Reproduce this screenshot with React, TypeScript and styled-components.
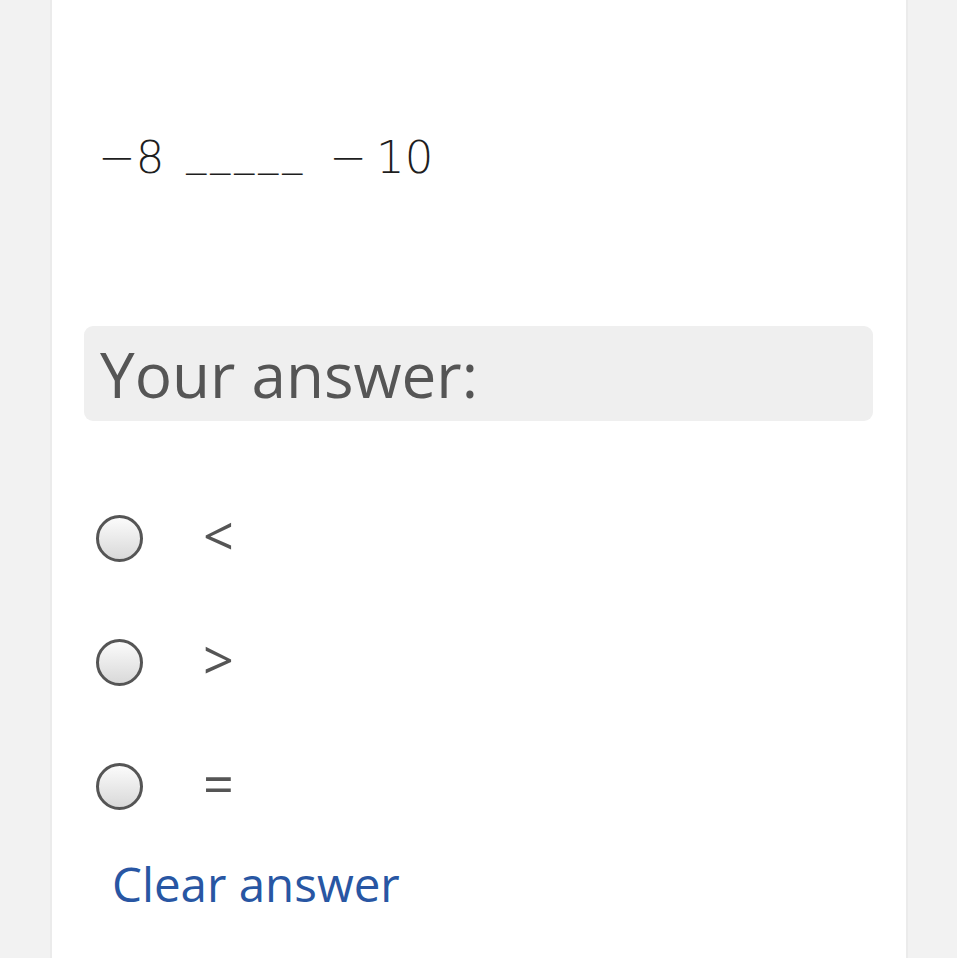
import React, { FC } from "react";
import styled, { createGlobalStyle } from "styled-components";

const GlobalStyle = createGlobalStyle`
  html, body {
    margin: 0;
    padding: 0;
    background: #f2f2f2;
    height: 958px;
    overflow: hidden;
  }
`;

const options = ["<", ">", "="];

const App: FC = () => {
  return (
    <>
      <GlobalStyle />
      <Page>
        <Card>
          <Question>
            <Term>−8</Term>
            <Blank>_____</Blank>
            <Term>−{"\u2009"}10</Term>
          </Question>

          <AnswerHeader>Your answer:</AnswerHeader>

          <OptionList>
            {options.map((option) => (
              <OptionRow key={option}>
                <Radio />
                <OptionLabel>{option}</OptionLabel>
              </OptionRow>
            ))}
          </OptionList>

          <ClearLink href="#">Clear answer</ClearLink>
        </Card>
      </Page>
    </>
  );
};

const Page = styled.div`
  display: flex;
  justify-content: flex-start;
  padding-left: 50px;
  height: 958px;
`;

const Card = styled.div`
  width: 858px;
  height: 1000px;
  box-sizing: border-box;
  background: #ffffff;
  border-left: 2px solid #ebebeb;
  border-right: 2px solid #ebebeb;
  padding: 0 33px 0 32px;
  display: flex;
  flex-direction: column;
`;

const Question = styled.div`
  margin-top: 128px;
  padding-left: 14px;
  display: flex;
  align-items: baseline;
  gap: 22px;
  font-family: "DejaVu Sans", sans-serif;
  font-size: 45px;
  font-weight: 200;
  color: #1e1e1e;
  height: 60px;
  line-height: 60px;
`;

const Term = styled.span``;

const Blank = styled.span`
  font-size: 40px;
  letter-spacing: 4px;
  margin-right: 1px;
  position: relative;
  top: -8px;
`;

const AnswerHeader = styled.div`
  margin-top: 138px;
  height: 95px;
  background: #efefef;
  border-radius: 9px;
  padding-left: 16px;
  display: flex;
  align-items: center;
  font-family: "Open Sans", sans-serif;
  font-size: 62px;
  color: #555555;
`;

const OptionList = styled.div`
  margin-top: 94px;
  display: flex;
  flex-direction: column;
  gap: 77px;
`;

const OptionRow = styled.label`
  display: flex;
  align-items: center;
  height: 47px;
  padding-left: 12px;
  cursor: pointer;
`;

const Radio = styled.span`
  width: 47px;
  height: 47px;
  box-sizing: border-box;
  border-radius: 50%;
  border: 3px solid #555555;
  background: linear-gradient(#fbfbfb, #d9d9d9);
  flex-shrink: 0;
`;

const OptionLabel = styled.span`
  margin-left: 60px;
  font-family: "Open Sans", sans-serif;
  font-size: 54px;
  line-height: 47px;
  color: #555555;
  position: relative;
  top: -3px;
`;

const ClearLink = styled.a`
  margin-top: 41px;
  padding-left: 28px;
  font-family: "Open Sans", sans-serif;
  font-size: 47.5px;
  color: #2856a3;
  text-decoration: none;
`;

export default App;
